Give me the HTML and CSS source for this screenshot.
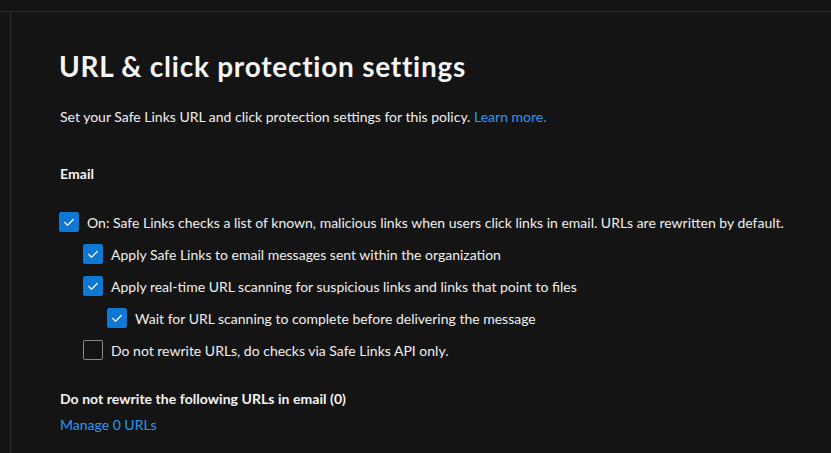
FILE: index.html
```html
<!DOCTYPE html>
<html lang="en">
<head>
<meta charset="utf-8">
<title>URL &amp; click protection settings</title>
<link rel="stylesheet" href="styles.css">
</head>
<body>
<div class="topbar"></div>
<div class="frame">
  <div class="rail"></div>
  <main class="content">
    <h1 class="title">URL &amp; click protection settings</h1>
    <p class="intro">Set your Safe Links URL and click protection settings for this policy. <a class="link" href="#">Learn more.</a></p>
    <h2 class="section">Email</h2>
    <ul class="checks">
      <li class="check level0"><span class="box on"><svg viewBox="0 0 20 20"><path d="M5.2 10.4 L8.4 13.6 L14.8 7.2"/></svg></span><span class="label">On: Safe Links checks a list of known, malicious links when users click links in email. URLs are rewritten by default.</span></li>
      <li class="check level1"><span class="box on"><svg viewBox="0 0 20 20"><path d="M5.2 10.4 L8.4 13.6 L14.8 7.2"/></svg></span><span class="label">Apply Safe Links to email messages sent within the organization</span></li>
      <li class="check level1"><span class="box on"><svg viewBox="0 0 20 20"><path d="M5.2 10.4 L8.4 13.6 L14.8 7.2"/></svg></span><span class="label">Apply real-time URL scanning for suspicious links and links that point to files</span></li>
      <li class="check level2"><span class="box on"><svg viewBox="0 0 20 20"><path d="M5.2 10.4 L8.4 13.6 L14.8 7.2"/></svg></span><span class="label">Wait for URL scanning to complete before delivering the message</span></li>
      <li class="check level1"><span class="box"></span><span class="label">Do not rewrite URLs, do checks via Safe Links API only.</span></li>
    </ul>
    <h2 class="section sub">Do not rewrite the following URLs in email (0)</h2>
    <a class="link manage" href="#">Manage 0 URLs</a>
  </main>
</div>
</body>
</html>
```
FILE: styles.css
```css
html, body {
  margin: 0;
  padding: 0;
  background: #141414;
  color: #ffffff;
  font-family: "Lato", "Open Sans", sans-serif;
  font-size: 14px;
  height: 100%;
  overflow: hidden;
}
.topbar {
  height: 11px;
  border-bottom: 1px solid #2b2b2b;
}
.frame {
  display: flex;
  height: calc(100% - 12px);
}
.rail {
  width: 10px;
  border-right: 1px solid #2b2b2b;
  flex: none;
}
.content {
  padding: 36px 0 0 48px;
  flex: 1;
}
.title {
  margin: 0;
  font-size: 28px;
  line-height: 36px;
  font-weight: 700;
  letter-spacing: 0.75px;
  color: #f5f5f5;
}
.intro {
  margin: 23px 0 0 1px;
  line-height: 20px;
  color: #f0f0f0;
}
.link {
  color: #2899f5;
  text-decoration: none;
}
.section {
  margin: 37px 0 0 1px;
  font-size: 14px;
  line-height: 20px;
  font-weight: 700;
  letter-spacing: 0.05px;
  color: #f5f5f5;
}
.section.sub {
  margin-top: 23px;
}
.checks {
  list-style: none;
  margin: 22px 0 0;
  padding: 0;
}
.check {
  display: flex;
  align-items: center;
  height: 32px;
  gap: 8px;
  color: #f0f0f0;
}
.level0 { padding-left: 0; }
.level1 { padding-left: 24px; }
.level2 { padding-left: 48px; }
.box {
  width: 20px;
  height: 20px;
  box-sizing: border-box;
  border: 1px solid #8a8a8a;
  border-radius: 2px;
  flex: none;
  display: flex;
}
.box.on {
  background: #0f78d4;
  border-color: #0f78d4;
}
.box svg {
  width: 18px;
  height: 18px;
  fill: none;
  stroke: #ffffff;
  stroke-width: 1.3;
  stroke-linecap: round;
  stroke-linejoin: round;
}
.manage {
  display: block;
  margin: 6px 0 0 1px;
  line-height: 20px;
}
```
